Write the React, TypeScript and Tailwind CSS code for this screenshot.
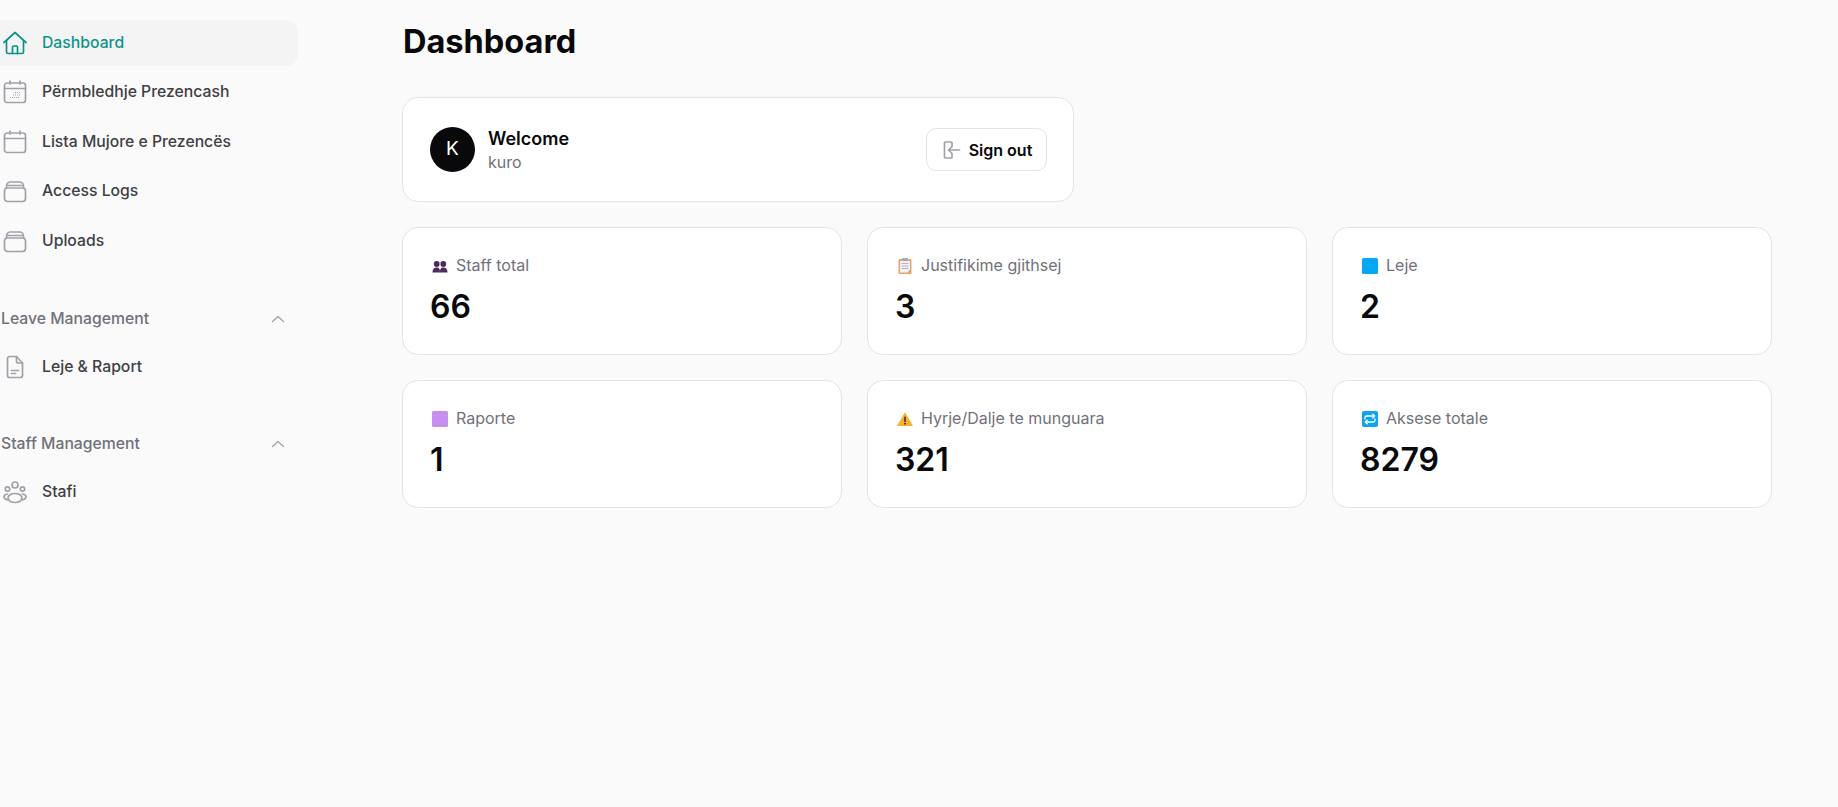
import React from "react";

const ic = { fill: "none", stroke: "currentColor", strokeWidth: 1.7, strokeLinecap: "round" as const, strokeLinejoin: "round" as const };

const Home = () => (
  <svg width="24" height="24" viewBox="0 0 24 24" {...ic}>
    <path d="M1 11.500 12 1.500l11 10" />
    <path d="M3.500 9.500V21a1.500 1.500 0 0 0 1.500 1.500h14a1.500 1.500 0 0 0 1.500-1.500V9.500" />
    <path d="M9.500 22.500V16a1 1 0 0 1 1-1h3a1 1 0 0 1 1 1v6.500" />
  </svg>
);
const Cal = ({ dots }: { dots?: boolean }) => (
  <svg width="24" height="24" viewBox="0 0 24 24" {...ic}>
    <rect x="1.500" y="3" width="21" height="19.500" rx="2.500" />
    <path d="M1.500 8.500h21M7 1v3M17 1v3" />
    {dots && <path strokeWidth="1" strokeDasharray="1 1" strokeLinecap="butt" d="M7 17.500h10M10 15h7M12 12.500h5" />}
  </svg>
);
const Box = () => (
  <svg width="24" height="24" viewBox="0 0 24 24" {...ic}>
    <rect x="1.500" y="9" width="21" height="13.500" rx="3" />
    <path d="M3.500 9V7.500C3.500 5 5 3 7 3h10c2 0 3.500 2 3.500 4.500V9" />
    <path d="M5 6.500h14" />
  </svg>
);
const Doc = () => (
  <svg width="24" height="24" viewBox="0 0 24 24" {...ic}>
    <path d="M13.500 1.500H6.500a2 2 0 0 0-2 2v17a2 2 0 0 0 2 2h11a2 2 0 0 0 2-2V8z" />
    <path d="M13.500 1.500V6a2 2 0 0 0 2 2h4M8.500 15.500h7M8.500 18.500h4" />
  </svg>
);
const Users = () => (
  <svg width="24" height="24" viewBox="0 0 24 24" {...ic}>
    <circle cx="12" cy="5" r="3" />
    <circle cx="4.500" cy="9" r="2.200" />
    <circle cx="19.500" cy="9" r="2.200" />
    <ellipse cx="12" cy="18" rx="7" ry="4.500" />
    <path d="M4.500 14c-2 .3-3.500 1.500-3.500 2.800S2.500 19.500 4.800 19.800M19.500 14c2 .3 3.500 1.500 3.500 2.800s-1.500 2.700-3.800 3" />
  </svg>
);
const Chevron = () => (
  <svg width="14" height="14" viewBox="0 0 14 14" fill="none" stroke="#a1a1aa" strokeWidth="1.300" strokeLinecap="round" strokeLinejoin="round">
    <path d="M1.500 9.500 7 4.500l5.500 5" />
  </svg>
);
const SignOutIcon = () => (
  <svg width="20" height="20" viewBox="0 0 20 20" fill="none" stroke="#a1a1aa" strokeWidth="1.700" strokeLinecap="round" strokeLinejoin="round">
    <path d="M10 2H4.500a1 1 0 0 0-1 1v14a1 1 0 0 0 1 1H10a1 1 0 0 0 1-1v-3.500M11 6.500V3a1 1 0 0 0-1-1" />
    <path d="M18.500 10H7.500M10.500 7l-3 3 3 3" />
  </svg>
);

const Busts = () => (
  <svg width="16" height="16" viewBox="0 0 16 16" fill="#4b2a5e">
    <circle cx="4.700" cy="6" r="2.900" />
    <circle cx="11.300" cy="6" r="2.900" />
    <path d="M0.500 14.500c0-3.500 1.500-5 4.200-5s3.300 1.500 3.300 5zM8 14.500c0-3.500.6-5 3.300-5s4.200 1.500 4.200 5z" />
  </svg>
);
const Clip = () => (
  <svg width="16" height="16" viewBox="0 0 16 16">
    <rect x="1.500" y="1" width="13" height="15" rx="1" fill="#e9a66c" />
    <rect x="3" y="3" width="10" height="11.500" fill="#f1f1f4" />
    <rect x="5" y="0" width="6" height="3" rx="0.800" fill="#a9a9b4" />
    <path d="M4.500 5.500h7M4.500 8h7M4.500 10.500h7" stroke="#b5b5c0" strokeWidth="1.100" />
    <path d="M10.500 14.500 13 12v2.500z" fill="#e58a3c" />
  </svg>
);
const Square = ({ color }: { color: string }) => (
  <svg width="16" height="16" viewBox="0 0 16 16">
    <rect width="16" height="16" rx="1.500" fill={color} />
  </svg>
);
const Warn = () => (
  <svg width="16" height="16" viewBox="0 0 16 16">
    <path d="M8 1.200 15.800 14.500a.4.400 0 0 1-.3.500H.5a.4.400 0 0 1-.3-.5z" fill="#fbb034" />
    <rect x="7.300" y="5.500" width="1.400" height="5.500" rx="0.600" fill="#2b2320" />
    <circle cx="8" cy="12.700" r="0.900" fill="#2b2320" />
  </svg>
);
const Repeat = () => (
  <svg width="16" height="16" viewBox="0 0 16 16">
    <rect width="16" height="16" rx="2" fill="#0ea5ee" />
    <g fill="none" stroke="#fff" strokeWidth="1.300" strokeLinecap="round" strokeLinejoin="round">
      <path d="M3 8V6.500A1.500 1.500 0 0 1 4.500 5H12.500M10.800 3.200 12.700 5l-1.900 1.800" />
      <path d="M13 8v1.500A1.500 1.500 0 0 1 11.500 11H3.500M5.200 9.200 3.300 11l1.900 1.800" />
    </g>
  </svg>
);

function NavItem({ icon, label, active }: { icon: React.ReactNode; label: string; active?: boolean }) {
  return (
    <div className={`flex h-[45.500px] items-center gap-[15px] rounded-r-xl pl-[3px] text-[15.750px] font-medium ${active ? "bg-[#f4f4f5] text-[#0d9488]" : "text-[#3f3f46]"}`}>
      <span className={`flex w-6 shrink-0 ${active ? "text-[#0d9488]" : "text-[#a1a1aa]"}`}>{icon}</span>
      <span>{label}</span>
    </div>
  );
}

function Section({ label }: { label: string }) {
  return (
    <div className="flex h-[20px] items-center justify-between pl-[1px] pr-[13px] text-[15.750px] font-medium text-[#71717a]">
      <span>{label}</span>
      <Chevron />
    </div>
  );
}

function Stat({ icon, label, value }: { icon: React.ReactNode; label: string; value: string }) {
  return (
    <div className="flex h-[128px] flex-col rounded-2xl border border-[#e4e4e7] bg-white pl-[27px] pt-[27px]">
      <div className="flex h-5 items-center gap-2 pl-[2px] text-base font-normal text-[#71717a]">
        <span className="flex w-4 shrink-0 translate-y-[1px]">{icon}</span>
        <span>{label}</span>
      </div>
      <div className="mt-[10px] text-[32px] leading-[44px] font-semibold text-[#09090b]">{value}</div>
    </div>
  );
}

export default function App() {
  return (
    <div className="flex min-h-[807px] bg-[#fafafa] font-['Inter',sans-serif]">
      <aside className="w-[298px] shrink-0 pt-[20px]">
        <nav className="flex flex-col gap-1">
          <NavItem active icon={<Home />} label="Dashboard" />
          <NavItem icon={<Cal dots />} label="Përmbledhje Prezencash" />
          <NavItem icon={<Cal />} label="Lista Mujore e Prezencës" />
          <NavItem icon={<Box />} label="Access Logs" />
          <NavItem icon={<Box />} label="Uploads" />
        </nav>
        <div className="mt-[45px]">
          <Section label="Leave Management" />
        </div>
        <div className="mt-[16px]">
          <NavItem icon={<Doc />} label="Leje & Raport" />
        </div>
        <div className="mt-[44px]">
          <Section label="Staff Management" />
        </div>
        <div className="mt-[15px]">
          <NavItem icon={<Users />} label="Stafi" />
        </div>
      </aside>
      <main className="ml-[104px] w-[1370px] pt-[22px]">
        <h1 className="pl-[1px] text-[32.500px] leading-[40px] font-bold text-[#09090b]">Dashboard</h1>
        <div className="mt-[35px] flex h-[105px] w-[672px] items-center justify-between rounded-2xl border border-[#e4e4e7] bg-white pl-[27px] pr-[26px]">
          <div className="flex items-center gap-[13px]">
            <div className="flex h-[45px] w-[45px] items-center justify-center rounded-full bg-[#09090b] text-[19px] text-white">K</div>
            <div className="pb-[1px]">
              <div className="text-[18px] leading-[25px] font-semibold text-[#09090b]">Welcome</div>
              <div className="mt-[1px] text-base leading-[21px] text-[#71717a]">kuro</div>
            </div>
          </div>
          <button className="flex h-[43px] w-[121px] items-center justify-center gap-[8px] rounded-[10px] border border-[#e4e4e7] bg-white text-base font-semibold text-[#09090b]">
            <SignOutIcon />
            Sign out
          </button>
        </div>
        <div className="mt-[25px] grid grid-cols-[440px_440px_440px] gap-x-[25px] gap-y-[25px]">
          <Stat icon={<Busts />} label="Staff total" value="66" />
          <Stat icon={<Clip />} label="Justifikime gjithsej" value="3" />
          <Stat icon={<Square color="#03a9f4" />} label="Leje" value="2" />
          <Stat icon={<Square color="#c78ff0" />} label="Raporte" value="1" />
          <Stat icon={<Warn />} label="Hyrje/Dalje te munguara" value="321" />
          <Stat icon={<Repeat />} label="Aksese totale" value="8279" />
        </div>
      </main>
    </div>
  );
}
